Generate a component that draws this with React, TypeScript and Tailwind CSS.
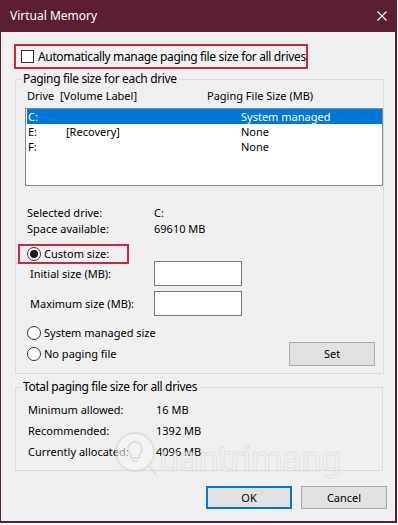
function CheckBox() {
  return <span className="w-[13px] h-[13px] shrink-0 bg-white border border-[#333333]" />
}

function Radio({ on }: { on?: boolean }) {
  return (
    <span className="w-[14px] h-[14px] shrink-0 rounded-full bg-white border border-[#333333] flex items-center justify-center">
      {on && <span className="w-[8px] h-[8px] rounded-full bg-[#1a1a1a]" />}
    </span>
  )
}

const drives = [
  { d: 'C:', label: '', size: 'System managed' },
  { d: 'E:', label: '[Recovery]', size: 'None' },
  { d: 'F:', label: '', size: 'None' },
]

const totals = [
  ['Minimum allowed:', '16 MB'],
  ['Recommended:', '1392 MB'],
  ['Currently allocated:', '4096 MB'],
]

export default function App() {
  return (
    <div className="relative w-[397px] h-[523px] bg-[#f0f0f0] border-l border-r-2 border-b-2 border-[#5b1e33] flex flex-col font-['Noto_Sans',sans-serif] text-[11px] leading-[16px] text-black overflow-hidden">
      {/* Title bar */}
      <div className="h-[32px] shrink-0 bg-[#5b1e33] flex items-center justify-between pl-[9px] pr-[8px] text-white text-[12px]">
        <span>Virtual Memory</span>
        <svg className="w-[10px] h-[10px]" viewBox="0 0 10 10" fill="none" stroke="white" strokeWidth="1.1">
          <path d="M0.5 0.5L9.5 9.5M9.5 0.5L0.5 9.5" />
        </svg>
      </div>

      {/* Auto manage */}
      <div className="ml-[13px] mt-[12px] w-[294px] h-[25px] border-2 border-[#c9283e] flex items-center pl-[5px] gap-[4px] whitespace-nowrap">
        <CheckBox />
        <span className="text-[12px] tracking-[-0.35px]">Automatically manage paging file size for all drives</span>
      </div>

      {/* Paging file size for each drive */}
      <fieldset className="ml-[14px] mt-[2px] w-[368px] border border-[#dcdcdc] pb-[7px]">
        <legend className="ml-[5px] px-[2px] leading-[16px] text-[12px] tracking-[-0.35px]">Paging file size for each drive</legend>

        <div className="mt-[1px] h-[16px] flex pl-[11px]">
          <span className="w-[33px]">Drive</span>
          <span className="w-[147px]">[Volume Label]</span>
          <span>Paging File Size (MB)</span>
        </div>

        <div className="ml-[9px] mt-[4px] w-[358px] h-[78px] bg-white border border-[#828790]">
          {drives.map((r, i) => (
            <div
              key={r.d}
              className={`ml-[1px] h-[15px] flex items-center pl-[1px] ${i === 0 ? 'bg-[#0078d7] text-white' : ''}`}
            >
              <span className="w-[38px]">{r.d}</span>
              <span className="w-[175px]">{r.label}</span>
              <span>{r.size}</span>
            </div>
          ))}
        </div>

        <div className="mt-[19px] h-[16px] flex pl-[11px]">
          <span className="w-[127px]">Selected drive:</span>
          <span>C:</span>
        </div>
        <div className="h-[16px] flex pl-[11px]">
          <span className="w-[127px]">Space available:</span>
          <span>69610 MB</span>
        </div>

        <div className="mt-[7px] ml-[2px] w-[111px] h-[20px] border-2 border-[#c9283e] flex items-center pl-[7px] gap-[3px]">
          <Radio on />
          <span>Custom size:</span>
        </div>

        <div className="-mt-[3px] h-[25px] flex items-center pl-[14px]">
          <span className="w-[124px]">Initial size (MB):</span>
          <span className="w-[88px] h-[25px] bg-white border border-[#7a7a7a]" />
        </div>
        <div className="mt-[5px] h-[25px] flex items-center pl-[14px]">
          <span className="w-[124px]">Maximum size (MB):</span>
          <span className="w-[88px] h-[25px] bg-white border border-[#7a7a7a]" />
        </div>

        <div className="mt-[9px] h-[16px] flex items-center pl-[11px] gap-[3px]">
          <Radio />
          <span>System managed size</span>
        </div>
        <div className="mt-[1px] h-[24px] flex items-center justify-between pl-[11px] pr-[8px]">
          <div className="flex items-center gap-[3px]">
            <Radio />
            <span>No paging file</span>
          </div>
          <button className="w-[86px] h-[24px] bg-[#e1e1e1] border border-[#adadad]">Set</button>
        </div>
      </fieldset>

      {/* Totals */}
      <fieldset className="ml-[14px] mt-[5px] w-[368px] border border-[#dcdcdc] pb-[10px]">
        <legend className="ml-[5px] px-[2px] leading-[16px] text-[12px] tracking-[-0.35px]">Total paging file size for all drives</legend>
        <div className="mt-[7px] flex flex-col gap-[5px]">
          {totals.map(([k, v]) => (
            <div key={k} className="h-[16px] flex pl-[12px]">
              <span className="w-[128px]">{k}</span>
              <span>{v}</span>
            </div>
          ))}
        </div>
      </fieldset>

      {/* Dialog buttons */}
      <div className="mt-[15px] flex justify-end gap-[9px] pr-[8px]">
        <button className="w-[86px] h-[23px] bg-[#e1e1e1] border-2 border-[#0078d7]">OK</button>
        <button className="w-[86px] h-[23px] bg-[#e1e1e1] border border-[#adadad]">Cancel</button>
      </div>

      {/* Watermark */}
      <div className="absolute left-[112px] top-[430px] flex items-end pointer-events-none opacity-60">
        <svg className="w-[46px] h-[48px]" viewBox="0 0 46 48" fill="none" stroke="#d6d6d6" strokeWidth="2">
          <circle cx="22" cy="22" r="19" fill="#f7f7f7" />
          <path d="M22 12a7 7 0 0 0-4 12.7V28h8v-3.3A7 7 0 0 0 22 12z" />
          <path d="M19 31h6M36 36l8 10" />
        </svg>
        <span className="text-[33px] leading-[36px] tracking-[-1px] font-['DejaVu_Sans',sans-serif] text-[#f6f6f6] [-webkit-text-stroke:1px_#d9d9d9]">
          uantrimang
        </span>
      </div>
    </div>
  )
}
